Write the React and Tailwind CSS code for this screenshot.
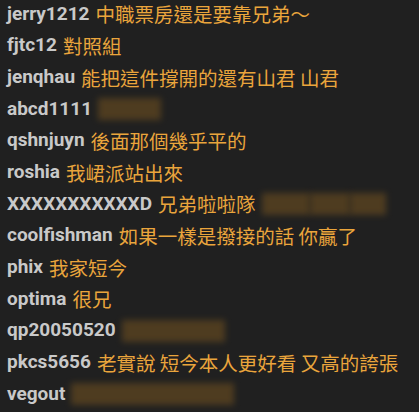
import React from "react";

const rows = [
  { u: "jerry1212", m: "中職票房還是要靠兄弟～" },
  { u: "fjtc12", m: "對照組" },
  { u: "jenqhau", m: "能把這件撐開的還有山君 山君" },
  { u: "abcd1111", blur: [{ w: 63 }] },
  { u: "qshnjuyn", m: "後面那個幾乎平的" },
  { u: "roshia", m: "我峮派站出來" },
  { u: "XXXXXXXXXXXD", m: "兄弟啦啦隊", blur: [{ w: 48 }, { w: 40 }, { w: 36 }] },
  { u: "coolfishman", m: "如果一樣是撥接的話 你贏了" },
  { u: "phix", m: "我家短今" },
  { u: "optima", m: "很兄" },
  { u: "qp20050520", blur: [{ w: 103 }] },
  { u: "pkcs5656", m: "老實說 短今本人更好看 又高的誇張" },
  { u: "vegout", blur: [{ w: 163 }] },
];

export default function App() {
  return (
    <div className="w-[419px] h-[412px] bg-[#202020] overflow-hidden">
      <div className="flex flex-col -mt-[2px]">
        {rows.map((r, i) => (
          <div key={i} className="h-[31.7px] flex items-center pl-[7px] whitespace-nowrap">
            <span
              className="text-[#c9c9c9] font-bold text-[19px]"
              style={{ fontFamily: "Roboto, 'Liberation Sans', sans-serif" }}
            >
              {r.u}
            </span>
            {r.m && (
              <span
                className="ml-[6px] text-[#eaa53c] text-[19.5px]"
                style={{ fontFamily: "'Noto Sans CJK TC', sans-serif" }}
              >
                {r.m}
              </span>
            )}
            {r.blur && (
              <span className="ml-[6px] flex items-center">
                {r.blur.map((b, j) => (
                  <span
                    key={j}
                    className="h-[22px] bg-[#5a4320] blur-[3px] opacity-80"
                    style={{ width: b.w }}
                  />
                ))}
              </span>
            )}
          </div>
        ))}
      </div>
    </div>
  );
}
